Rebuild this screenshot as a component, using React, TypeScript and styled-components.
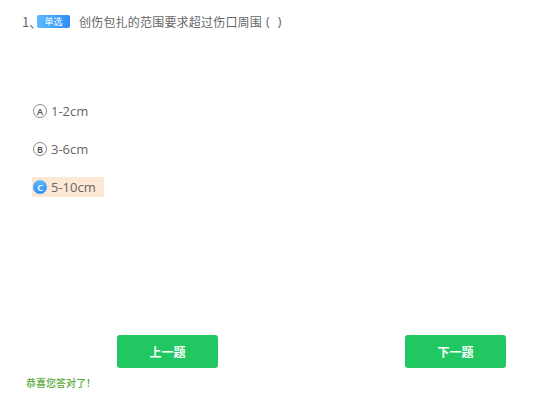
import React from "react";
import styled, { createGlobalStyle, css } from "styled-components";

const Global = createGlobalStyle`
  html, body { margin: 0; padding: 0; background: #fff; }
  body { font-family: "Noto Sans CJK SC", "Noto Sans", sans-serif; }
`;

const Page = styled.div`
  width: 558px;
  height: 419px;
  display: flex;
  flex-direction: column;
  box-sizing: border-box;
  padding-top: 12px;
`;

const Header = styled.div`
  display: flex;
  align-items: center;
  padding-left: 22px;
  height: 18px;
  color: #666;
  font-size: 12px;
`;

const Num = styled.span`
  font-size: 13px;
  color: #666;
  width: 15px;
`;

const Badge = styled.span`
  display: inline-flex;
  align-items: center;
  justify-content: center;
  width: 33px;
  height: 13px;
  border-radius: 2px;
  background: linear-gradient(90deg, #5cb8ff, #2f8ef5);
  color: #fff;
  font-size: 9px;
  line-height: 1;
  margin-right: 9px;
`;

const QText = styled.span`
  color: #666;
  font-size: 12px;
  letter-spacing: 0.2px;
`;

const Paren = styled.span`
  font-family: "Noto Sans", sans-serif;
  margin-left: 4px;
  word-spacing: 5px;
  color: #666;
`;

const Options = styled.div`
  display: flex;
  flex-direction: column;
  gap: 18px;
  padding-left: 32px;
  margin-top: 71px;
`;

const Option = styled.div<{ $active?: boolean }>`
  display: flex;
  align-items: center;
  align-self: flex-start;
  height: 20px;
  padding: 0 8px 0 1px;
  gap: 4px;
  color: #666;
  font-size: 13px;
  ${(p) =>
    p.$active &&
    css`
      background: #fde7d5;
    `}
`;

const Mark = styled.span<{ $active?: boolean }>`
  width: 14px;
  height: 14px;
  box-sizing: border-box;
  border-radius: 50%;
  border: 1px solid #8a8a8a;
  display: inline-flex;
  align-items: center;
  justify-content: center;
  font-size: 9px;
  font-family: "Noto Sans", sans-serif;
  font-weight: 600;
  color: #555;
  line-height: 1;
  ${(p) =>
    p.$active &&
    css`
      border: none;
      background: linear-gradient(180deg, #5cb8ff, #2f8ef5);
      color: #fff;
    `}
`;

const OptText = styled.span`
  font-family: "Open Sans", "Noto Sans", sans-serif;
  font-size: 13px;
  color: #666;
`;

const Footer = styled.div`
  margin-top: auto;
  display: flex;
  flex-direction: column;
  padding-bottom: 31px;
`;

const ButtonRow = styled.div`
  display: flex;
  justify-content: space-between;
  padding: 0 52px 0 117px;
`;

const Button = styled.button`
  width: 101px;
  height: 33px;
  border: none;
  border-radius: 3px;
  background: #21c862;
  color: #fff;
  font-size: 12px;
  font-weight: 700;
  font-family: "Noto Sans CJK SC", sans-serif;
  cursor: pointer;
  padding: 0;
`;

const Feedback = styled.div`
  margin-top: 9px;
  padding-left: 26px;
  font-size: 10px;
  color: #5aa83c;
  font-weight: 500;
  line-height: 11px;
`;

const options = [
  { key: "A", text: "1-2cm" },
  { key: "B", text: "3-6cm" },
  { key: "C", text: "5-10cm", active: true },
];

export default function App() {
  return (
    <Page>
      <Global />
      <Header>
        <Num>1、</Num>
        <Badge>单选</Badge>
        <QText>创伤包扎的范围要求超过伤口周围</QText>
        <Paren>( )</Paren>
      </Header>
      <Options>
        {options.map((o) => (
          <Option key={o.key} $active={o.active}>
            <Mark $active={o.active}>{o.key}</Mark>
            <OptText>{o.text}</OptText>
          </Option>
        ))}
      </Options>
      <Footer>
        <ButtonRow>
          <Button>上一题</Button>
          <Button>下一题</Button>
        </ButtonRow>
        <Feedback>恭喜您答对了！</Feedback>
      </Footer>
    </Page>
  );
}
